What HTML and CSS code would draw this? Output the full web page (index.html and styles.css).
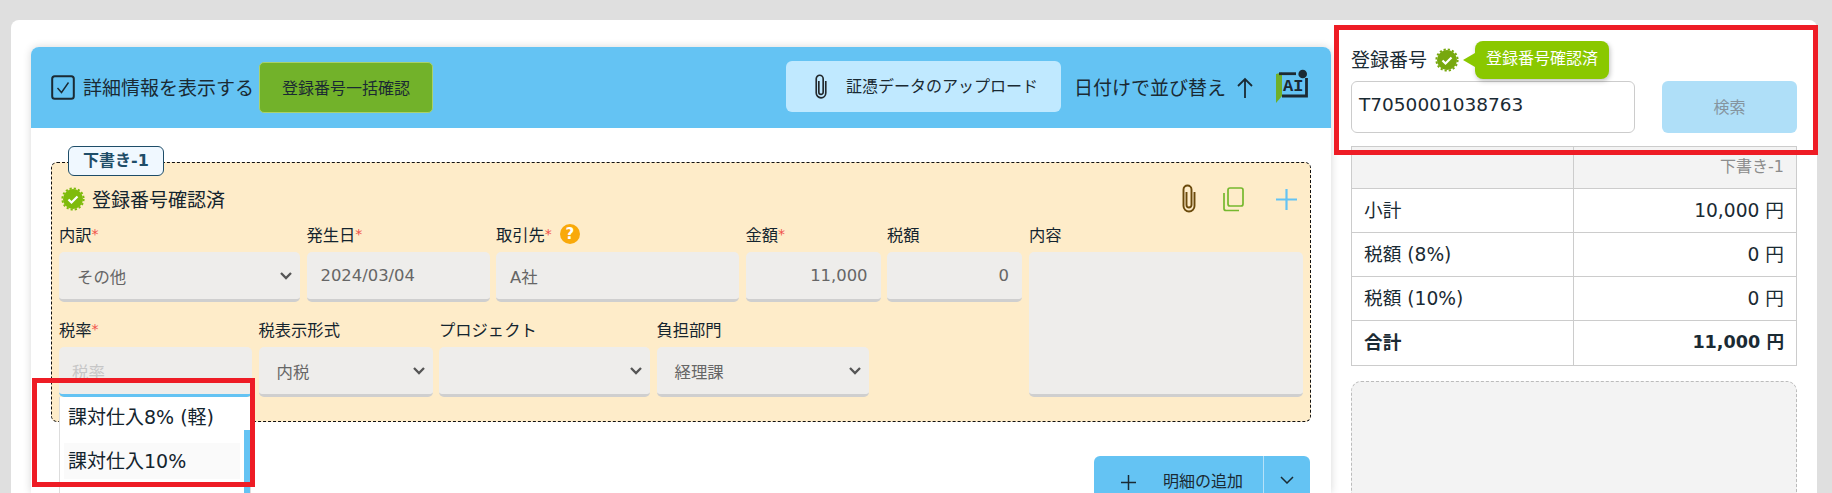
FILE: index.html
```html
<!DOCTYPE html>
<html lang="ja">
<head>
<meta charset="utf-8">
<title>登録番号確認</title>
<link rel="stylesheet" href="styles.css">
</head>
<body>
<div class="page">
  <main class="panel">
    <header class="panel-head">
      <svg class="check-box" viewBox="0 0 24 25"><rect x="1.2" y="1.2" width="21.6" height="22.6" rx="2.5" fill="none" stroke="#1a2a33" stroke-width="2"/><path d="M6.5 13l4 4.5 7-10" fill="none" stroke="#1a2a33" stroke-width="1.4"/></svg>
      <span class="head-text">詳細情報を表示する</span>
      <button class="bulk-btn">登録番号一括確認</button>
      <button class="upload-btn">
        <svg class="clip" viewBox="0 0 16 30"><path d="M13.5 8V22a5.5 5.5 0 0 1-11 0V5.5a4 4 0 0 1 8 0V21a2.5 2.5 0 0 1-5 0V8" fill="none" stroke="#22282c" stroke-width="1.9"/></svg>
        <span class="upload-label">証憑データのアップロード</span>
      </button>
      <span class="sort-text">日付けで並び替え</span>
      <svg class="sort-arrow" viewBox="0 0 18 22"><path d="M9 21V2M2 9l7-7 7 7" fill="none" stroke="#1a2a33" stroke-width="1.8"/></svg>
      <svg class="ai-icon" viewBox="0 0 34 33"><path d="M0 4L6 2.5V26L0 33Z" fill="#6faf2a"/><path d="M3 3.7H20" stroke="#1c2a33" stroke-width="2.8" fill="none"/><path d="M30.5 8V26H6" stroke="#1c2a33" stroke-width="2.8" fill="none"/><circle cx="26.7" cy="4" r="4.3" fill="#1c2a33"/><text x="7" y="20.7" class="ai-text">AI</text></svg>
    </header>
    <section class="panel-body">
      <div class="draft">
        <div class="draft-tag">下書き-1</div>
        <div class="draft-top">
          <svg class="badge" viewBox="0 0 24 24"><circle cx="12" cy="12" r="10" fill="#7fbb0c"/><circle cx="12" cy="12" r="10.6" fill="none" stroke="#7fbb0c" stroke-width="2" stroke-dasharray="2.2 2"/><path d="M7.5 12.5l3 3 6-6" fill="none" stroke="#fff" stroke-width="2.2"/></svg>
          <span class="draft-status">登録番号確認済</span>
          <div class="draft-actions">
            <svg class="clip-brown" viewBox="0 0 16 30"><path d="M13.5 8V22a5.5 5.5 0 0 1-11 0V5.5a4 4 0 0 1 8 0V21a2.5 2.5 0 0 1-5 0V8" fill="none" stroke="#6b4a0c" stroke-width="1.9"/></svg>
            <svg class="copy" viewBox="0 0 21 25"><rect x="5" y="1" width="15" height="18" rx="2" fill="none" stroke="#76b82e" stroke-width="1.7"/><path d="M1 6V21.5a2 2 0 0 0 2 2H16" fill="none" stroke="#76b82e" stroke-width="1.7"/></svg>
            <svg class="plus" viewBox="0 0 21 21"><path d="M10.5 0V21M0 10.5H21" stroke="#64c3f3" stroke-width="2.2"/></svg>
          </div>
        </div>
        <div class="form">
          <div class="form-left">
            <div class="row row-one">
              <div class="field"><label class="lbl">内訳<i>*</i></label><div class="ctl sel"><span>その他</span><svg class="chev" viewBox="0 0 12 8"><path d="M1 1l5 5 5-5" fill="none" stroke="#555" stroke-width="2.3"/></svg></div></div>
              <div class="field"><label class="lbl">発生日<i>*</i></label><div class="ctl narrow"><span>2024/03/04</span></div></div>
              <div class="field"><label class="lbl">取引先<i>*</i><b class="help">?</b></label><div class="ctl narrow"><span>A社</span></div></div>
              <div class="field"><label class="lbl">金額<i>*</i></label><div class="ctl num"><span>11,000</span></div></div>
              <div class="field"><label class="lbl">税額</label><div class="ctl num"><span>0</span></div></div>
            </div>
            <div class="row row-two">
              <div class="field rate">
                <label class="lbl">税率<i>*</i></label>
                <div class="ctl active"><span>税率</span></div>
                <ul class="dropdown">
                  <li>課対仕入8% (軽)</li>
                  <li class="hover">課対仕入10%</li>
                </ul>
              </div>
              <div class="field"><label class="lbl">税表示形式</label><div class="ctl sel"><span>内税</span><svg class="chev" viewBox="0 0 12 8"><path d="M1 1l5 5 5-5" fill="none" stroke="#555" stroke-width="2.3"/></svg></div></div>
              <div class="field"><label class="lbl">プロジェクト</label><div class="ctl sel"><span></span><svg class="chev" viewBox="0 0 12 8"><path d="M1 1l5 5 5-5" fill="none" stroke="#555" stroke-width="2.3"/></svg></div></div>
              <div class="field"><label class="lbl">負担部門</label><div class="ctl sel"><span>経理課</span><svg class="chev" viewBox="0 0 12 8"><path d="M1 1l5 5 5-5" fill="none" stroke="#555" stroke-width="2.3"/></svg></div></div>
            </div>
          </div>
          <div class="field memo"><label class="lbl">内容</label><div class="ctl memo-box"></div></div>
        </div>
      </div>
      <div class="add-row">
        <div class="add-btn">
          <div class="add-main">
            <svg class="add-plus" viewBox="0 0 15 15"><path d="M7.5 0V15M0 7.5H15" stroke="#1a2a33" stroke-width="1.5"/></svg>
            <span>明細の追加</span>
          </div>
          <div class="add-more"><svg viewBox="0 0 14 8"><path d="M1 1l6 6 6-6" fill="none" stroke="#1a2a33" stroke-width="1.5"/></svg></div>
        </div>
      </div>
    </section>
  </main>
  <aside class="side">
    <div class="reg-head">
      <span class="reg-label">登録番号</span>
      <svg class="badge reg-badge" viewBox="0 0 24 24"><circle cx="12" cy="12" r="10" fill="#77a80e"/><circle cx="12" cy="12" r="10.6" fill="none" stroke="#77a80e" stroke-width="2" stroke-dasharray="2.2 2"/><path d="M7.5 12.5l3 3 6-6" fill="none" stroke="#fff" stroke-width="2.2"/></svg>
      <span class="tip">登録番号確認済</span>
    </div>
    <div class="reg-input-row">
      <div class="reg-input">T7050001038763</div>
      <button class="search-btn">検索</button>
    </div>
    <table class="totals">
      <tr class="t-head"><th></th><th>下書き-1</th></tr>
      <tr class="t-row"><td>小計</td><td>10,000 円</td></tr>
      <tr class="t-row"><td>税額 (8%)</td><td>0 円</td></tr>
      <tr class="t-row"><td>税額 (10%)</td><td>0 円</td></tr>
      <tr class="t-sum"><td>合計</td><td class="sum-value">11,000 円</td></tr>
    </table>
    <div class="drop-zone"></div>
  </aside>
</div>
<div class="mark mark-side"></div>
<div class="mark mark-list"></div>
</body>
</html>
```
FILE: styles.css
```css
* { box-sizing: border-box; }
html, body { margin: 0; height: 493px; overflow: hidden; }
body {
  position: relative;
  background: #dfdfdf;
  color: #1a2a33;
  font-family: "DejaVu Sans", "Noto Sans CJK JP", sans-serif;
  font-size: 16px;
}
button { font-family: inherit; border: 0; padding: 0; }
.page {
  display: flex;
  gap: 20px;
  width: 1806px;
  height: 473px;
  margin: 20px 0 0 11px;
  padding: 21px 20px 0;
  background: #fff;
  border-radius: 8px 8px 0 0;
}

/* left panel */
.panel {
  width: 1300px;
  height: 446px;
  margin-top: 6px;
  flex: none;
  border-radius: 8px 8px 0 0;
  background: #fff;
  box-shadow: 0 0 9px rgba(0, 0, 0, .16);
}
.panel-head {
  display: flex;
  align-items: center;
  height: 81px;
  padding: 0 21px 0 20px;
  background: #64c3f3;
  border-radius: 8px 8px 0 0;
}
.check-box { width: 24px; height: 25px; flex: none; }
.head-text { margin-left: 8px; padding-bottom: 3px; font-size: 19px; white-space: nowrap; }
.bulk-btn {
  width: 174px;
  height: 51px;
  margin: 0 0 0 5px;
  padding-bottom: 2px;
  background: #72b22a;
  border: 1px solid #a9d16b;
  border-radius: 5px;
  color: #1a2a33;
  font-size: 16px;
}
.upload-btn {
  display: flex;
  align-items: center;
  width: 275px;
  height: 51px;
  margin: -2px 0 0 auto;
  padding-left: 28px;
  background: #c0e9ff;
  border-radius: 6px;
  color: #1a2a33;
  font-size: 16px;
}
.upload-label { padding-bottom: 3px; }
.clip { width: 14px; height: 26px; flex: none; margin-right: 18px; }
.sort-text { margin-left: 13px; padding-bottom: 3px; font-size: 19px; white-space: nowrap; }
.sort-arrow { width: 18px; height: 22px; margin-left: 10px; flex: none; }
.ai-icon { width: 34px; height: 33px; margin: 0 0 2px 22px; flex: none; overflow: visible; }
.ai-text { font: 700 17px "Liberation Mono", monospace; fill: #1c2a33; }

.panel-body { padding: 34px 20px 0; }
.draft {
  position: relative;
  height: 260px;
  padding: 20px 7px 0;
  background: #feecc9;
  border: 1px dashed #111;
  border-radius: 6px;
}
.draft-tag {
  position: absolute;
  top: -17px;
  left: 16px;
  width: 96px;
  height: 30px;
  background: #f0f8ff;
  border: 1px solid #1e4d68;
  border-radius: 6px;
  color: #1e4d68;
  font-size: 16px;
  font-weight: 700;
  line-height: 27px;
  text-align: center;
}
.draft-top { display: flex; align-items: center; height: 32px; padding-left: 2px; }
.badge { width: 24px; height: 24px; flex: none; }
.draft-status { margin-left: 7px; padding-bottom: 2px; font-size: 19px; color: #14242e; }
.draft-actions { display: flex; align-items: center; margin-left: auto; padding-right: 6px; }
.clip-brown { width: 16px; height: 30px; }
.copy { width: 21px; height: 25px; margin-left: 26px; }
.plus { width: 21px; height: 21px; margin-left: 32px; }

.form { display: flex; justify-content: space-between; margin-top: 8px; }
.form-left { width: 963px; }
.row { display: grid; column-gap: 6.5px; }
.row-one { grid-template-columns: 241px 183px 243px 135px 135px; }
.row-two { grid-template-columns: 193px 174px 211px 212px; margin-top: 16px; }
.field { position: relative; min-width: 0; }
.lbl {
  display: flex;
  align-items: center;
  height: 29px;
  padding-bottom: 8px;
  font-size: 16.3px;
  color: #14242e;
  white-space: nowrap;
}
.lbl i { color: #f0504a; font-style: normal; font-size: 14px; }
.help {
  width: 20px;
  height: 20px;
  margin-left: 8px;
  border-radius: 50%;
  background: #f9a90a;
  color: #fff;
  font-size: 15px;
  line-height: 20px;
  text-align: center;
}
.ctl {
  display: flex;
  align-items: center;
  height: 50px;
  padding: 0 13px 0 14px;
  background: #eeedeb;
  border-bottom: 3px solid #cfcfcf;
  border-radius: 5px;
  color: #666;
  font-size: 16.4px;
}
.sel { justify-content: space-between; padding: 0 8px 0 18px; }
.chev { width: 12px; height: 8px; flex: none; }
.num { justify-content: flex-end; }
.active { padding-left: 13px; color: #c6c6c6; border-bottom-color: #64c3f3; }
.memo { width: 274px; }
.memo-box { height: 145px; }

.dropdown {
  position: absolute;
  top: 100%;
  left: 0;
  width: 192px;
  height: 96px;
  margin: 0;
  padding: 2px 10px 0 4px;
  list-style: none;
  background: #fff;
  border-left: 1px solid #ddd;
  border-right: 1px solid #ddd;
  font-size: 19px;
  color: #14242e;
}
.dropdown::after {
  content: "";
  position: absolute;
  top: 33px;
  right: 0;
  bottom: 0;
  width: 6px;
  background: #64c3f3;
}
.dropdown li { height: 36px; padding-left: 4px; line-height: 36px; margin-bottom: 8px; white-space: nowrap; }
.dropdown .hover { background: #fafafa; }

.add-row { display: flex; justify-content: flex-end; margin: 34px 1px 0 0; overflow: hidden; height: 37px; }
.add-btn { display: flex; width: 216px; height: 48px; background: #64c3f3; border-radius: 6px; overflow: hidden; }
.add-main { display: flex; width: 170px; height: 48px; align-items: center; padding-left: 27px; border-right: 1px solid #b5e1f8; }
.add-plus { width: 15px; height: 15px; margin-top: 4px; }
.add-main span { margin-left: 27px; font-size: 16px; }
.add-more { display: flex; flex: 1; height: 48px; align-items: center; justify-content: center; }
.add-more svg { width: 14px; height: 8px; }

/* right column */
.side { width: 446px; height: 452px; flex: none; overflow: hidden; }
.reg-head { display: flex; align-items: center; height: 38px; }
.reg-label { padding-bottom: 3px; font-size: 19px; }
.reg-badge { margin-left: 8px; }
.tip {
  position: relative;
  height: 38px;
  margin-left: 16px;
  padding: 0 11px;
  background: #8ac800;
  border-radius: 8px;
  box-shadow: 1px 2px 5px rgba(0, 0, 0, .25);
  color: #fff;
  font-size: 16px;
  line-height: 36px;
}
.tip::before {
  content: "";
  position: absolute;
  top: 12px;
  left: -12px;
  border: 7px solid transparent;
  border-left: 0;
  border-right: 12px solid #8ac800;
}
.reg-input-row { display: flex; justify-content: space-between; margin-top: 2px; }
.reg-input {
  width: 284px;
  height: 52px;
  padding: 0 7px 4px;
  border: 1px solid #ccc;
  border-radius: 6px;
  font-size: 18.5px;
  line-height: 46px;
  color: #1a2a33;
}
.search-btn {
  width: 135px;
  height: 52px;
  padding-bottom: 2px;
  background: #afdff8;
  border-radius: 6px;
  color: #85959f;
  font-size: 16px;
}
.totals {
  width: 446px;
  margin-top: 13px;
  border-collapse: collapse;
  table-layout: fixed;
  font-size: 18.67px;
}
.totals th, .totals td { border: 1px solid #ccc; padding: 0 12px 5px; }
.totals th:first-child, .totals td:first-child { width: 222px; text-align: left; }
.totals th:last-child, .totals td:last-child { text-align: right; }
.t-head { height: 42px; background: #f3f3f3; }
.t-head th { font-size: 16px; font-weight: 400; color: #8c8c8c; vertical-align: top; padding-top: 6px; }
.t-row { height: 44px; }
.t-sum { height: 45px; font-weight: 700; }
.totals .sum-value { font-size: 17.6px; }
.drop-zone {
  height: 200px;
  margin-top: 15px;
  background: #f3f3f3;
  border: 1px dashed #bbb;
  border-radius: 10px;
}

/* red annotation frames */
.mark { position: absolute; border: 5px solid #ee1c25; pointer-events: none; }
.mark-side { left: 1334px; top: 25px; width: 484px; height: 130px; }
.mark-list { left: 32px; top: 378px; width: 223px; height: 109px; }
```
